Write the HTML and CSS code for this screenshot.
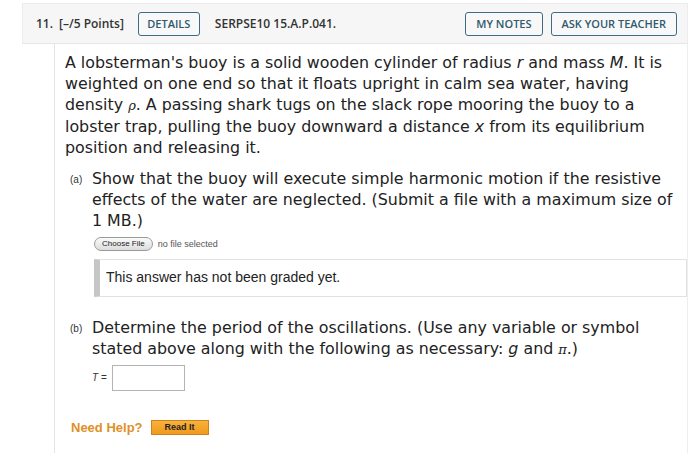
FILE: index.html
```html
<!DOCTYPE html>
<html>
<head>
<meta charset="utf-8">
<link rel="stylesheet" href="styles.css">
</head>
<body>
<div class="question">
  <div class="qhead">
    <span class="qnum">11.</span>
    <span class="qpts">[–/5 Points]</span>
    <span class="btn btn-details">DETAILS</span>
    <span class="qcode">SERPSE10 15.A.P.041.</span>
    <span class="spacer"></span>
    <span class="btn">MY NOTES</span>
    <span class="btn">ASK YOUR TEACHER</span>
  </div>
  <div class="qbody">
    <p class="stem">A lobsterman's buoy is a solid wooden cylinder of radius <i>r</i> and mass <i>M</i>. It is weighted on one end so that it floats upright in calm sea water, having density <i class="greek">ρ</i>. A passing shark tugs on the slack rope mooring the buoy to a lobster trap, pulling the buoy downward a distance <i>x</i> from its equilibrium position and releasing it.</p>

    <div class="part part-a">
      <span class="plabel">(a)</span>
      <div class="pcontent">
        <p class="ptext">Show that the buoy will execute simple harmonic motion if the resistive effects of the water are neglected. (Submit a file with a maximum size of 1 MB.)</p>
        <div class="filerow">
          <span class="filebtn">Choose File</span>
          <span class="filename">no file selected</span>
        </div>
        <div class="graded">This answer has not been graded yet.</div>
      </div>
    </div>

    <div class="part part-b">
      <span class="plabel">(b)</span>
      <div class="pcontent">
        <p class="ptext">Determine the period of the oscillations. (Use any variable or symbol stated above along with the following as necessary: <i>g</i> and <i class="greek">π</i>.)</p>
        <div class="answerrow">
          <span class="avar"><i>T</i> =</span>
          <span class="ainput"></span>
        </div>
      </div>
    </div>

    <div class="help">
      <span class="helptext">Need Help?</span>
      <span class="readit">Read It</span>
    </div>
  </div>
</div>
</body>
</html>
```

FILE: styles.css
```css
html, body {
  margin: 0;
  padding: 0;
  background: #ffffff;
}

.question {
  margin: 3px 12px 0 22px;
}

.qhead {
  display: flex;
  align-items: center;
  height: 41px;
  padding: 0 10px 0 13px;
  background: #f6f6f6;
  border: 1px solid #ececec;
  border-bottom: 1px solid #e6e6e6;
  box-sizing: border-box;
  font-family: "Open Sans", sans-serif;
  font-weight: 600;
  font-size: 12px;
  color: #333333;
}

.qnum {
  margin-right: 6px;
}

.qpts {
  margin-right: 14px;
}

.btn {
  display: inline-flex;
  align-items: center;
  justify-content: center;
  height: 24px;
  padding: 0 10px;
  box-sizing: border-box;
  border: 1px solid #3e6c82;
  border-radius: 3px;
  background: #f8f8f8;
  color: #2f5a70;
  font-size: 11px;
  font-weight: 600;
  margin-left: 8px;
}

.btn-details {
  margin-left: 0;
  width: 62px;
}

.qcode {
  margin-left: 15px;
}

.spacer {
  flex: 1;
}

.qbody {
  margin-left: 32px;
  border-left: 1px solid #e4e4e4;
  border-right: 1px solid #eeeeee;
  padding: 8px 0 20px 10px;
  min-height: 380px;
  font-family: "DejaVu Sans", Verdana, sans-serif;
  font-size: 15.85px;
  line-height: 21.2px;
  color: #222222;
}

.stem {
  margin: 0;
  padding-right: 16px;
}

.greek {
  font-family: "DejaVu Serif", serif;
  font-size: 13px;
  line-height: 1;
}

.part {
  display: flex;
  padding-left: 5px;
}

.part-a {
  margin-top: 10px;
}

.part-b {
  margin-top: 20px;
}

.plabel {
  width: 22px;
  flex: none;
  font-family: "Liberation Sans", Arial, sans-serif;
  font-size: 10px;
  line-height: 21px;
  color: #333333;
  padding-top: 1px;
}

.pcontent {
  flex: 1;
}

.ptext {
  margin: 0;
  padding-right: 4px;
}

.filerow {
  display: flex;
  align-items: center;
  margin-top: 5px;
  margin-left: 2px;
  font-family: "Liberation Sans", Arial, sans-serif;
  font-size: 9px;
  line-height: 12px;
}

.filebtn {
  display: inline-block;
  height: 12px;
  padding: 0 7px;
  border: 1px solid #9a9a9a;
  border-radius: 7px;
  background: linear-gradient(#fbfbfb, #dcdcdc);
  color: #222;
  font-size: 8px;
  line-height: 12px;
}

.filename {
  margin-left: 5px;
  color: #555;
}

.graded {
  margin-top: 8px;
  margin-left: 2px;
  height: 38px;
  box-sizing: border-box;
  border: 1px solid #e2e2e2;
  border-left: 6px solid #c6c6c6;
  padding-left: 6px;
  display: flex;
  align-items: center;
  font-family: "Liberation Sans", Arial, sans-serif;
  font-size: 14px;
  color: #222;
}

.answerrow {
  display: flex;
  align-items: center;
  margin-top: 6px;
  line-height: 14px;
}

.avar {
  font-family: "Liberation Sans", Arial, sans-serif;
  font-size: 10px;
  color: #333;
  margin-right: 5px;
}

.ainput {
  display: inline-block;
  width: 73px;
  height: 26px;
  box-sizing: border-box;
  border: 1px solid #b4b4b4;
  background: #fff;
}

.help {
  display: flex;
  align-items: center;
  margin-top: 29px;
  padding-left: 6px;
  font-family: "Liberation Sans", Arial, sans-serif;
  line-height: 15px;
}

.helptext {
  color: #df9026;
  font-weight: bold;
  font-size: 13px;
}

.readit {
  margin-left: 8px;
  width: 58px;
  height: 15px;
  box-sizing: border-box;
  border: 1px solid #c9821e;
  background: linear-gradient(#f8b13a, #f09a1c);
  color: #222;
  font-size: 9px;
  font-weight: bold;
  text-align: center;
  line-height: 13px;
}
```
